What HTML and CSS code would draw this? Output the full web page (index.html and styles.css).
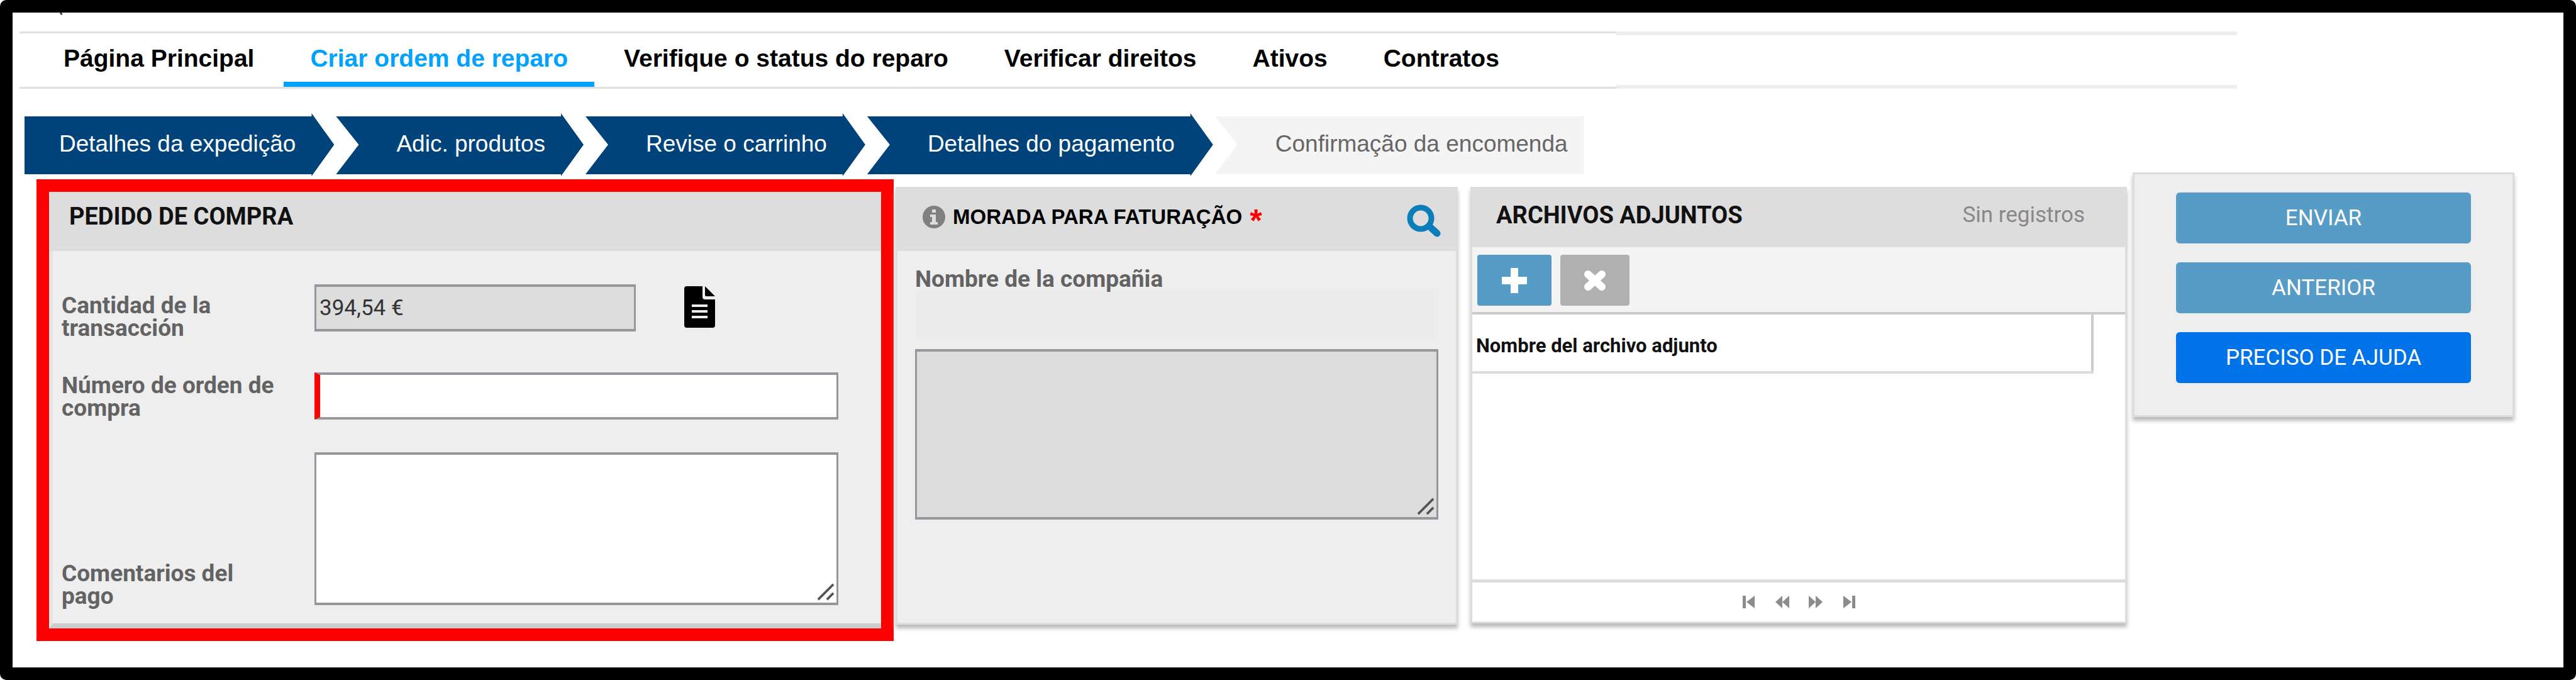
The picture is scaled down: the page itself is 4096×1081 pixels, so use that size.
FILE: index.html
```html
<!DOCTYPE html>
<html lang="pt">
<head>
<meta charset="utf-8">
<title>Criar ordem de reparo</title>
<link rel="stylesheet" href="styles.css">
</head>
<body>
<div class="page">
  <nav class="nav">
    <div class="tabs">
      <a class="tab" href="#">Página Principal</a>
      <a class="tab tab-active" href="#">Criar ordem de reparo</a>
      <a class="tab" href="#">Verifique o status do reparo</a>
      <a class="tab" href="#">Verificar direitos</a>
      <a class="tab" href="#">Ativos</a>
      <a class="tab" href="#">Contratos</a>
    </div>
    <div class="nav-rest"></div>
  </nav>

  <ol class="steps">
    <li class="step step-first">Detalhes da expedição</li>
    <li class="step">Adic. produtos</li>
    <li class="step">Revise o carrinho</li>
    <li class="step">Detalhes do pagamento</li>
    <li class="step step-last">Confirmação da encomenda</li>
  </ol>

  <main class="columns">
    <section class="order">
      <header class="panel-head order-head"><h2>PEDIDO DE COMPRA</h2></header>
      <div class="order-body">
        <label for="amount">Cantidad de la transacción</label>
        <div class="amount-row">
          <input id="amount" class="field field-amount" type="text" value="394,54 €" readonly>
          <svg class="doc-icon" viewBox="0 0 49 66" aria-hidden="true">
            <path fill="#000" d="M4 0H29V17Q29 21 33 21H49V62Q49 66 45 66H4Q0 66 0 62V4Q0 0 4 0Z"/>
            <path fill="#000" d="M33 0L49 16H35Q33 16 33 14Z"/>
            <path stroke="#eee" stroke-width="4" d="M12 31H37M12 40H37M12 49H37"/>
          </svg>
        </div>
        <label for="number">Número de orden de compra</label>
        <input id="number" class="field field-required" type="text">
        <label for="comments">Comentarios del pago</label>
        <div class="area-wrap comments-wrap">
          <textarea id="comments" class="field area area-comments"></textarea>
          <svg class="grip" viewBox="0 0 30 30" aria-hidden="true"><path d="M2 28L28 2M17 28L28 17"/></svg>
        </div>
      </div>
    </section>

    <section class="panel billing">
      <header class="panel-head billing-head">
        <svg class="info-icon" viewBox="0 0 36 36" aria-hidden="true">
          <circle cx="18" cy="18" r="18" fill="#808080"/>
          <path fill="#ddd" d="M15 6h6v5h-6zM12 14h9v12h3v4H12v-4h3v-8h-3z"/>
        </svg>
        <h2>MORADA PARA FATURAÇÃO</h2>
        <span class="required">*</span>
        <button class="search" type="button" aria-label="Pesquisar">
          <svg viewBox="0 0 54 52" aria-hidden="true">
            <circle cx="22" cy="22" r="17" fill="none" stroke="#0b7db8" stroke-width="9"/>
            <path stroke="#0b7db8" stroke-width="11" stroke-linecap="round" d="M36 35L48 46"/>
          </svg>
        </button>
      </header>
      <div class="billing-body">
        <label for="company">Nombre de la compañia</label>
        <input id="company" class="company" type="text" readonly>
        <div class="area-wrap">
          <textarea class="field area area-address" aria-label="Morada" readonly></textarea>
          <svg class="grip" viewBox="0 0 30 30" aria-hidden="true"><path d="M2 28L28 2M17 28L28 17"/></svg>
        </div>
      </div>
    </section>

    <section class="panel files">
      <header class="panel-head files-head">
        <h2>ARCHIVOS ADJUNTOS</h2>
        <span class="count">Sin registros</span>
      </header>
      <div class="toolbar">
        <button class="tool tool-add" type="button" aria-label="Adicionar">
          <svg viewBox="0 0 40 40" aria-hidden="true"><path stroke="#fff" stroke-width="12" stroke-linejoin="round" d="M20 0V40M0 20H40"/></svg>
        </button>
        <button class="tool tool-remove" type="button" aria-label="Remover" disabled>
          <svg viewBox="0 0 40 40" aria-hidden="true"><path stroke="#fff" stroke-width="12" stroke-linecap="round" d="M9 10L31 30M31 10L9 30"/></svg>
        </button>
      </div>
      <div class="list">
        <table class="table">
          <thead><tr><th scope="col">Nombre del archivo adjunto</th></tr></thead>
        </table>
      </div>
      <div class="pager">
        <button type="button" aria-label="Primeira"><svg viewBox="0 0 22 20"><path d="M1 0H6V20H1ZM20 0V20L7 10Z"/></svg></button>
        <button type="button" aria-label="Anterior"><svg viewBox="0 0 22 20"><path d="M11 0V20L0 10ZM22 0V20L11 10Z"/></svg></button>
        <button type="button" aria-label="Seguinte"><svg viewBox="0 0 22 20"><path d="M0 0V20L11 10ZM11 0V20L22 10Z"/></svg></button>
        <button type="button" aria-label="Última"><svg viewBox="0 0 22 20"><path d="M16 0H21V20H16ZM2 0V20L15 10Z"/></svg></button>
      </div>
    </section>

    <aside class="actions">
      <button class="action" type="button">ENVIAR</button>
      <button class="action" type="button">ANTERIOR</button>
      <button class="action action-help" type="button">PRECISO DE AJUDA</button>
    </aside>
  </main>
</div>
</body>
</html>
```
FILE: styles.css
```css
* {
  box-sizing: border-box;
}

body {
  margin: 0;
  background: #fff;
  font-family: Roboto, "Liberation Sans", sans-serif;
}

.page {
  position: relative;
  min-height: 100vh;
  border: 20px solid #000;
  border-radius: 10px;
  padding-top: 30px;
}

/* Tail of the clipped heading above the navigation */
.page::before {
  content: "";
  position: absolute;
  top: 0;
  left: 75px;
  width: 4px;
  height: 4px;
  border-radius: 0 0 0 4px;
  background: #555;
}

h2 {
  margin: 0;
  font-size: 38px;
  line-height: 44px;
  font-weight: 700;
  color: #111;
  white-space: nowrap;
}

button {
  border: 0;
  padding: 0;
  background: none;
  font: inherit;
}

svg {
  display: block;
}

/* Navigation */
.nav {
  display: grid;
  grid-template-columns: 2539fr 987fr 519fr;
  padding-left: 11px;
}

.tabs {
  display: flex;
  gap: 5px;
  height: 91px;
  padding-left: 28px;
  border-top: 3px solid #e0e0e0;
  border-bottom: 3px solid #e0e0e0;
}

.tab {
  padding: 17px 42px 0;
  border-bottom: 8px solid transparent;
  font-family: "Liberation Sans", Arial, sans-serif;
  font-size: 39px;
  line-height: 46px;
  font-weight: 700;
  color: #000;
  text-decoration: none;
  white-space: nowrap;
}

.tab-active {
  color: #00a2ff;
  border-bottom-color: #00a2ff;
}

.nav-rest {
  height: 91px;
  border-top: 6px solid #eee;
  border-bottom: 6px solid #eee;
}

/* Progress steps */
.steps {
  display: flex;
  gap: 3px;
  margin: 39px 0 0;
  padding: 0 0 0 19px;
  list-style: none;
}

.step {
  height: 100px;
  padding: 28px 61px 0 96px;
  background: #00437a;
  clip-path: polygon(0 5px, calc(100% - 36px) 5px, calc(100% - 36px) 0, 100% 50%, calc(100% - 36px) 100%, calc(100% - 36px) 97px, 0 97px, 36px 50%);
  font-family: "Liberation Sans", Arial, sans-serif;
  font-size: 37px;
  line-height: 42px;
  color: #fff;
  white-space: nowrap;
}

.step-first {
  padding-left: 55px;
  clip-path: polygon(0 5px, calc(100% - 36px) 5px, calc(100% - 36px) 0, 100% 50%, calc(100% - 36px) 100%, calc(100% - 36px) 97px, 0 97px);
}

.step-last {
  padding-right: 26px;
  background: #f4f4f4;
  clip-path: polygon(0 5px, 100% 5px, 100% 97px, 0 97px, 36px 50%);
  color: #666;
}

/* Columns */
.columns {
  display: grid;
  grid-template-columns: 1363fr 3px 894fr 20px 1044fr 9px 607fr;
  margin-top: -6px;
  padding: 0 78px 0 38px;
}

.panel-head {
  display: flex;
  align-items: center;
  background: #ddd;
}

/* Purchase order */
.order {
  grid-column: 1;
  margin-top: 11px;
  border: 20px solid #f00;
}

.order-head {
  height: 94px;
  padding: 0 0 16px 32px;
}

.order-body {
  display: grid;
  grid-template-columns: 402px 1fr;
  row-gap: 52px;
  padding: 53px 68px 25px 14px;
  border-left: 6px solid #e4e4e4;
  border-bottom: 8px solid #ccc;
  background: #eee;
}

label {
  font-size: 37px;
  line-height: 36px;
  font-weight: 700;
  color: #636363;
}

.order-body label {
  align-self: end;
  padding-right: 50px;
}

.field {
  display: block;
  width: 100%;
  height: 75px;
  margin: 0;
  padding: 0 5px;
  border: 4px solid #94979c;
  border-width: 4px 3px;
  border-radius: 0;
  background: #fff;
  font-family: inherit;
  font-size: 35px;
  color: #333;
}

.amount-row {
  display: flex;
  gap: 77px;
  height: 88px;
}

.field-amount {
  width: 511px;
  background: #ddd;
}

.doc-icon {
  width: 49px;
  height: 66px;
  margin-top: 3px;
}

.field-required {
  border-left: 9px solid #f00;
}

.area-wrap {
  position: relative;
}

.comments-wrap {
  margin-bottom: 4px;
}

.area {
  resize: none;
}

.area-comments {
  height: 243px;
}

.grip {
  position: absolute;
  right: 6px;
  bottom: 7px;
  width: 28px;
  height: 28px;
  fill: none;
  stroke: #555;
  stroke-width: 4px;
}

/* Billing address */
.panel {
  margin-top: 23px;
  box-shadow: 0 6px 6px #bbb;
}

.billing {
  grid-column: 3;
  margin-bottom: 26px;
  border: 3px solid #ddd;
  border-top: 0;
  background: #eee;
}

.billing-head {
  height: 102px;
  padding: 0 24px 7px 40px;
}

.billing-head h2 {
  margin-left: 12px;
  font-family: "Liberation Sans", Arial, sans-serif;
  font-size: 33px;
  color: #000;
}

.info-icon {
  width: 36px;
  height: 36px;
}

.required {
  margin: 12px 0 0 12px;
  font-family: "Liberation Sans", Arial, sans-serif;
  font-size: 50px;
  line-height: 50px;
  font-weight: 700;
  color: #f00;
}

.search {
  margin: 12px 0 0 auto;
}

.search svg {
  width: 54px;
  height: 52px;
}

.billing-body {
  padding: 27px 28px 0;
}

.billing-body label {
  display: block;
}

.company {
  display: block;
  width: 100%;
  height: 80px;
  margin: 0 0 13px;
  padding: 0;
  border: 0;
  background: #ececec;
}

.area-address {
  height: 271px;
  background: #ddd;
}

/* Attachments */
.files {
  grid-column: 5;
  display: flex;
  flex-direction: column;
  margin-bottom: 28px;
  border: 3px solid #ddd;
  border-top: 0;
  background: #fff;
}

.files-head {
  height: 96px;
  justify-content: space-between;
  padding: 0 64px 7px 38px;
}

.count {
  font-size: 35px;
  line-height: 40px;
  color: #888;
}

.toolbar {
  display: flex;
  gap: 14px;
  height: 107px;
  padding: 12px 8px 0;
  border-bottom: 4px solid #ccc;
  background: #f4f4f4;
}

.tool {
  display: grid;
  place-items: center;
  height: 81px;
  border-radius: 4px;
}

.tool svg {
  width: 40px;
  height: 40px;
}

.tool-add {
  width: 118px;
  background: #579bc7;
}

.tool-remove {
  width: 110px;
  background: #b0b0b0;
}

.list {
  flex: 1;
  padding-right: 50px;
  border-bottom: 5px solid #ddd;
}

.table {
  width: 100%;
  border-collapse: collapse;
}

.table th {
  height: 92px;
  padding: 9px 6px 0;
  border-right: 4px solid #ccc;
  border-bottom: 4px solid #ddd;
  font-size: 31px;
  line-height: 36px;
  font-weight: 700;
  text-align: left;
  color: #111;
}

.pager {
  display: flex;
  justify-content: center;
  align-items: center;
  gap: 31px;
  height: 62px;
}

.pager svg {
  width: 22px;
  height: 20px;
  fill: #8c8c8c;
}

/* Action buttons */
.actions {
  grid-column: 7;
  display: flex;
  flex-direction: column;
  align-self: start;
  gap: 30px;
  padding: 29px 66px 51px;
  border: 3px solid #ddd;
  background: #eee;
  box-shadow: 0 6px 6px #bbb;
}

.action {
  height: 81px;
  border-radius: 6px;
  background: #579bc7;
  font-size: 35px;
  line-height: 40px;
  color: #fff;
}

.action-help {
  background: #0073e9;
}
```
